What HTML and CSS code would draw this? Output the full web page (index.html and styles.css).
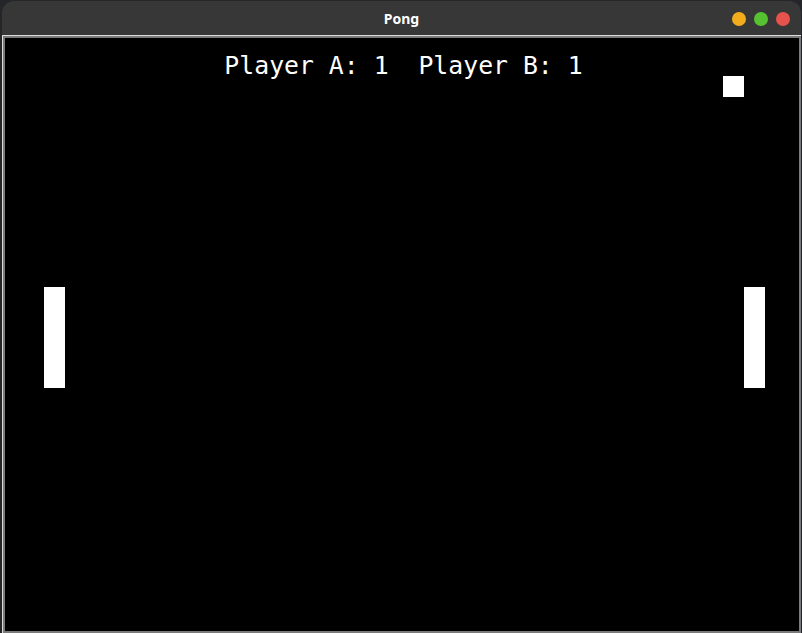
FILE: index.html
```html
<!DOCTYPE html>
<html>
<head>
<meta charset="utf-8">
<title>Pong</title>
<link rel="stylesheet" href="styles.css">
</head>
<body>
<div class="window">
  <div class="titlebar">
    <span class="title">Pong</span>
    <div class="controls">
      <span class="dot dot-min"></span>
      <span class="dot dot-max"></span>
      <span class="dot dot-close"></span>
    </div>
  </div>
  <div class="frame">
    <div class="canvas">
      <div class="score">Player A: 1&nbsp;&nbsp;Player B: 1</div>
      <div class="paddle paddle-a"></div>
      <div class="paddle paddle-b"></div>
      <div class="ball"></div>
    </div>
  </div>
</div>
</body>
</html>
```
FILE: styles.css
```css
html, body {
  margin: 0;
  padding: 0;
  background: #24262a;
  width: 802px;
  height: 633px;
  overflow: hidden;
}
.window {
  margin: 1px 1px 0 2px;
  width: 799px;
  height: 632px;
  display: flex;
  flex-direction: column;
  border-radius: 12px 12px 0 0;
  overflow: hidden;
}
.titlebar {
  height: 34px;
  flex: none;
  background: #373737;
  position: relative;
  display: flex;
  align-items: center;
  justify-content: center;
}
.title {
  font-family: "Noto Sans", "DejaVu Sans", sans-serif;
  font-weight: bold;
  font-size: 14px;
  color: #ffffff;
  padding-top: 1px;
}
.controls {
  position: absolute;
  right: 11px;
  top: 11px;
  display: flex;
  gap: 8px;
}
.dot {
  width: 14px;
  height: 14px;
  border-radius: 50%;
  display: block;
}
.dot-min { background: #f2ac1c; }
.dot-max { background: #56c232; }
.dot-close { background: #e8524d; }
.frame {
  flex: 1;
  background: #7a7a7a;
  border-top: 1px solid #dcdcdc;
  border-left: 1px solid #dcdcdc;
  padding: 2px;
  display: flex;
}
.canvas {
  flex: 1;
  background: #000000;
  position: relative;
}
.score {
  margin-top: 13px;
  padding-left: 3px;
  text-align: center;
  font-family: "DejaVu Sans Mono", "Liberation Mono", monospace;
  font-size: 24.8px;
  line-height: 29px;
  color: #ffffff;
  white-space: pre;
}
.paddle {
  position: absolute;
  top: 249px;
  width: 21px;
  height: 101px;
  background: #ffffff;
}
.paddle-a { left: 39px; }
.paddle-b { left: 739px; }
.ball {
  position: absolute;
  left: 718px;
  top: 38px;
  width: 21px;
  height: 21px;
  background: #ffffff;
}
```
